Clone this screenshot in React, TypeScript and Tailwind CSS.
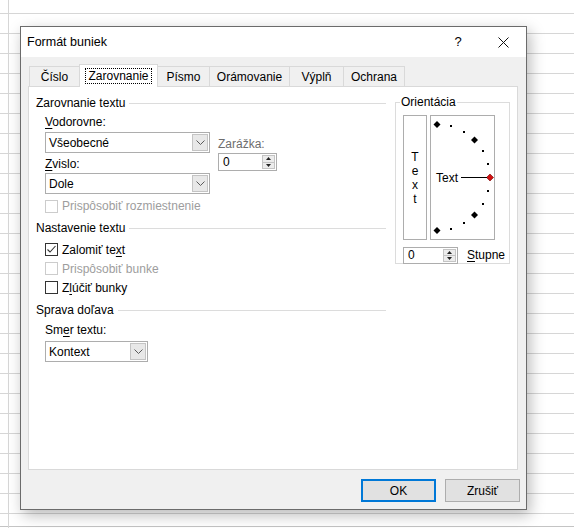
import React from "react";

const ui = "font-['Segoe_UI','Liberation_Sans',Arial,sans-serif] text-[12px] text-black";

function Chevron() {
  return (
    <svg width="9" height="5" viewBox="0 0 9 5">
      <path d="M0.5 0.5 L4.5 4.5 L8.5 0.5" fill="none" stroke="#5a5a5a" strokeWidth="1" />
    </svg>
  );
}

function Select({ value, className }: { value: string; className: string }) {
  return (
    <div className={`flex border border-[#adadad] bg-white ${className}`}>
      <div className="flex flex-1 items-center pl-[3px]">{value}</div>
      <div className="m-[1px] flex w-[16px] items-center justify-center border border-[#c4c4c4] bg-[#e8e8e8]">
        <Chevron />
      </div>
    </div>
  );
}

function Spinner({ value, className }: { value: string; className: string }) {
  return (
    <div className={`flex border border-[#adadad] bg-white ${className}`}>
      <div className="flex flex-1 items-center pl-[4px]">{value}</div>
      <div className="my-[1px] mr-[1px] flex w-[13px] flex-col border border-[#c4c4c4] bg-[#ececec]">
        <div className="flex flex-1 items-center justify-center border-b border-[#c4c4c4]">
          <svg width="5" height="3" viewBox="0 0 5 3">
            <path d="M0 3 L2.5 0 L5 3 Z" fill="#222" />
          </svg>
        </div>
        <div className="flex flex-1 items-center justify-center">
          <svg width="5" height="3" viewBox="0 0 5 3">
            <path d="M0 0 L2.5 3 L5 0 Z" fill="#222" />
          </svg>
        </div>
      </div>
    </div>
  );
}

function Checkbox({ checked, disabled }: { checked?: boolean; disabled?: boolean }) {
  return (
    <div
      className={
        disabled
          ? "flex h-[13px] w-[13px] items-center justify-center border border-[#cccccc] bg-white"
          : "flex h-[13px] w-[13px] items-center justify-center border border-[#333333] bg-white"
      }
    >
      {checked && (
        <svg width="11" height="11" viewBox="0 0 11 11">
          <path d="M1.5 5.5 L4 8 L9.5 2" fill="none" stroke="#333" strokeWidth="1.1" />
        </svg>
      )}
    </div>
  );
}

function Heading({ children }: { children: React.ReactNode }) {
  return (
    <div className="flex h-[16px] items-center gap-[4px]">
      <span className="leading-[16px]">{children}</span>
      <div className="h-px flex-1 bg-[#dcdcdc]" />
    </div>
  );
}

// semicircle of degree marks, centre on the left edge
function Dial() {
  const cx = 6;
  const cy = 61.5;
  const r = 53;
  const marks = [];
  for (let a = 90; a >= -90; a -= 15) {
    const rad = (a * Math.PI) / 180;
    const x = cx + r * Math.cos(rad);
    const y = cy - r * Math.sin(rad);
    if (a === 0) {
      marks.push(
        <polygon
          key={a}
          points={`${x},${y - 3.5} ${x + 3.5},${y} ${x},${y + 3.5} ${x - 3.5},${y}`}
          fill="#d01010"
          stroke="#7a0000"
          strokeWidth="0.6"
        />
      );
    } else if (a % 45 === 0) {
      marks.push(
        <polygon
          key={a}
          points={`${x},${y - 3.5} ${x + 3.5},${y} ${x},${y + 3.5} ${x - 3.5},${y}`}
          fill="#000"
        />
      );
    } else {
      marks.push(<rect key={a} x={Math.round(x) - 1} y={Math.round(y) - 1} width="2" height="2" fill="#000" />);
    }
  }
  return (
    <svg width="63" height="123" viewBox="0 0 63 123">
      {marks}
      <text x="5" y="66" fontSize="12" fontFamily="'Segoe UI','Liberation Sans',Arial,sans-serif" fill="#000">
        Text
      </text>
      <line x1="30" y1="61.5" x2="56" y2="61.5" stroke="#000" strokeWidth="1" />
    </svg>
  );
}

const tabs = [
  { label: "Číslo", w: "w-[51px]" },
  { label: "Zarovnanie", w: "w-[79px]", active: true },
  { label: "Písmo", w: "w-[53px]" },
  { label: "Orámovanie", w: "w-[81px]" },
  { label: "Výplň", w: "w-[55px]" },
  { label: "Ochrana", w: "w-[62px]" },
];

export default function App() {
  return (
    <div
      className={`h-[528px] w-[574px] overflow-hidden bg-white pl-[20px] pt-[26px] ${ui} [background-image:linear-gradient(90deg,transparent_8px,#d6d6d6_8px,#d6d6d6_9px,transparent_9px),linear-gradient(180deg,transparent_526px,#c4c4c4_526px,#c4c4c4_527px,transparent_527px),repeating-linear-gradient(180deg,transparent_0px,transparent_13px,#d6d6d6_13px,#d6d6d6_14px,transparent_14px,transparent_20px)]`}
    >
      <div className="flex h-[484px] w-[507px] flex-col border border-[#6b6b6b] bg-[#f0f0f0] shadow-[3px_5px_14px_rgba(0,0,0,0.28)]">
        {/* title bar */}
        <div className="flex h-[30px] items-center bg-white pl-[6px]">
          <span className="flex-1 text-[12.5px]">Formát buniek</span>
          <span className="w-[20px] text-center text-[13px]">?</span>
          <div className="ml-[13px] flex w-[45px] items-center justify-center">
            <svg width="11" height="11" viewBox="0 0 11 11">
              <path d="M0.5 0.5 L10.5 10.5 M10.5 0.5 L0.5 10.5" stroke="#111" strokeWidth="1" />
            </svg>
          </div>
        </div>

        {/* tabs */}
        <div className="mt-[7px] flex h-[22px] items-end pl-[8px]">
          {tabs.map((t, i) =>
            t.active ? (
              <div
                key={t.label}
                className={`relative top-[1px] z-10 -ml-px flex h-[23px] items-center justify-center border border-b-0 border-[#d9d9d9] bg-white ${t.w}`}
              >
                <span className="border border-dotted border-black px-[2px] leading-[14px]">{t.label}</span>
              </div>
            ) : (
              <div
                key={t.label}
                className={`flex h-[20px] items-center justify-center border border-b-0 border-[#d9d9d9] bg-[#f0f0f0] ${i > 0 ? "-ml-px" : ""} ${t.w}`}
              >
                {t.label}
              </div>
            )
          )}
        </div>

        {/* panel */}
        <div className="ml-[7px] flex h-[384px] w-[490px] border border-[#d9d9d9] bg-white pl-[7px] pt-[8px]">
          <div className="flex w-[350px] flex-col">
            <Heading>Zarovnanie textu</Heading>
            <div className="mt-[3px] h-[16px] pl-[9px] leading-[16px]">
              <span className="underline underline-offset-2">V</span>odorovne:
            </div>
            <div className="mt-[2px] flex pl-[9px]">
              <div className="flex w-[165px] flex-col">
                <Select value="Všeobecné" className="h-[21px]" />
                <div className="mt-[3px] h-[16px] leading-[16px]">
                  <span className="underline underline-offset-2">Z</span>vislo:
                </div>
                <Select value="Dole" className="mt-[1px] h-[21px]" />
              </div>
              <div className="ml-[8px] flex flex-col">
                <div className="mt-[4px] h-[16px] leading-[16px] text-[#6d6d6d]">Zarážka:</div>
                <Spinner value="0" className="mt-[1px] h-[18px] w-[59px]" />
              </div>
            </div>
            <div className="mt-[4px] flex h-[16px] items-center gap-[4px] pl-[9px] text-[#9d9d9d]">
              <Checkbox disabled />
              <span>Prispôsobiť rozmiestnenie</span>
            </div>

            <div className="mt-[6px]">
              <Heading>Nastavenie textu</Heading>
            </div>
            <div className="mt-[4px] flex flex-col pl-[9px]">
              <div className="flex h-[19px] items-center gap-[4px]">
                <Checkbox checked />
                <span>
                  Zalomiť te<span className="underline underline-offset-2">x</span>t
                </span>
              </div>
              <div className="flex h-[19px] items-center gap-[4px] text-[#9d9d9d]">
                <Checkbox disabled />
                <span>Prispôsobiť bunke</span>
              </div>
              <div className="flex h-[19px] items-center gap-[4px]">
                <Checkbox />
                <span>
                  Z<span className="underline underline-offset-2">l</span>účiť bunky
                </span>
              </div>
            </div>

            <div className="mt-[5px]">
              <Heading>Sprava doľava</Heading>
            </div>
            <div className="mt-[4px] h-[16px] pl-[9px] leading-[16px]">
              Sm<span className="underline underline-offset-2">e</span>r textu:
            </div>
            <div className="mt-[3px] pl-[9px]">
              <Select value="Kontext" className="h-[21px] w-[103px]" />
            </div>
          </div>

          {/* orientation group */}
          <div className="relative ml-[9px] mt-[7px] h-[162px] w-[115px] border border-[#dcdcdc] pl-[7px] pt-[12px]">
            <span className="absolute left-[4px] top-[-9px] bg-white px-[1px] leading-[16px]">Orientácia</span>
            <div className="flex gap-[3px]">
              <div className="flex h-[125px] w-[24px] flex-col items-center justify-center border border-[#adadad] leading-[14px]">
                <span>T</span>
                <span>e</span>
                <span>x</span>
                <span>t</span>
              </div>
              <div className="h-[125px] w-[65px] border border-[#adadad]">
                <Dial />
              </div>
            </div>
            <div className="mt-[6px] flex items-center">
              <Spinner value="0" className="h-[17px] w-[55px]" />
              <span className="ml-[9px]">
                <span className="underline underline-offset-2">S</span>tupne
              </span>
            </div>
          </div>
        </div>

        {/* buttons */}
        <div className="mt-[9px] flex justify-end gap-[9px] pr-[6px]">
          <button className="flex h-[23px] w-[75px] items-center justify-center border-2 border-[#0078d7] bg-[#e1e1e1]">
            OK
          </button>
          <button className="flex h-[23px] w-[75px] items-center justify-center border border-[#adadad] bg-[#e1e1e1]">
            Zrušiť
          </button>
        </div>
      </div>
    </div>
  );
}
